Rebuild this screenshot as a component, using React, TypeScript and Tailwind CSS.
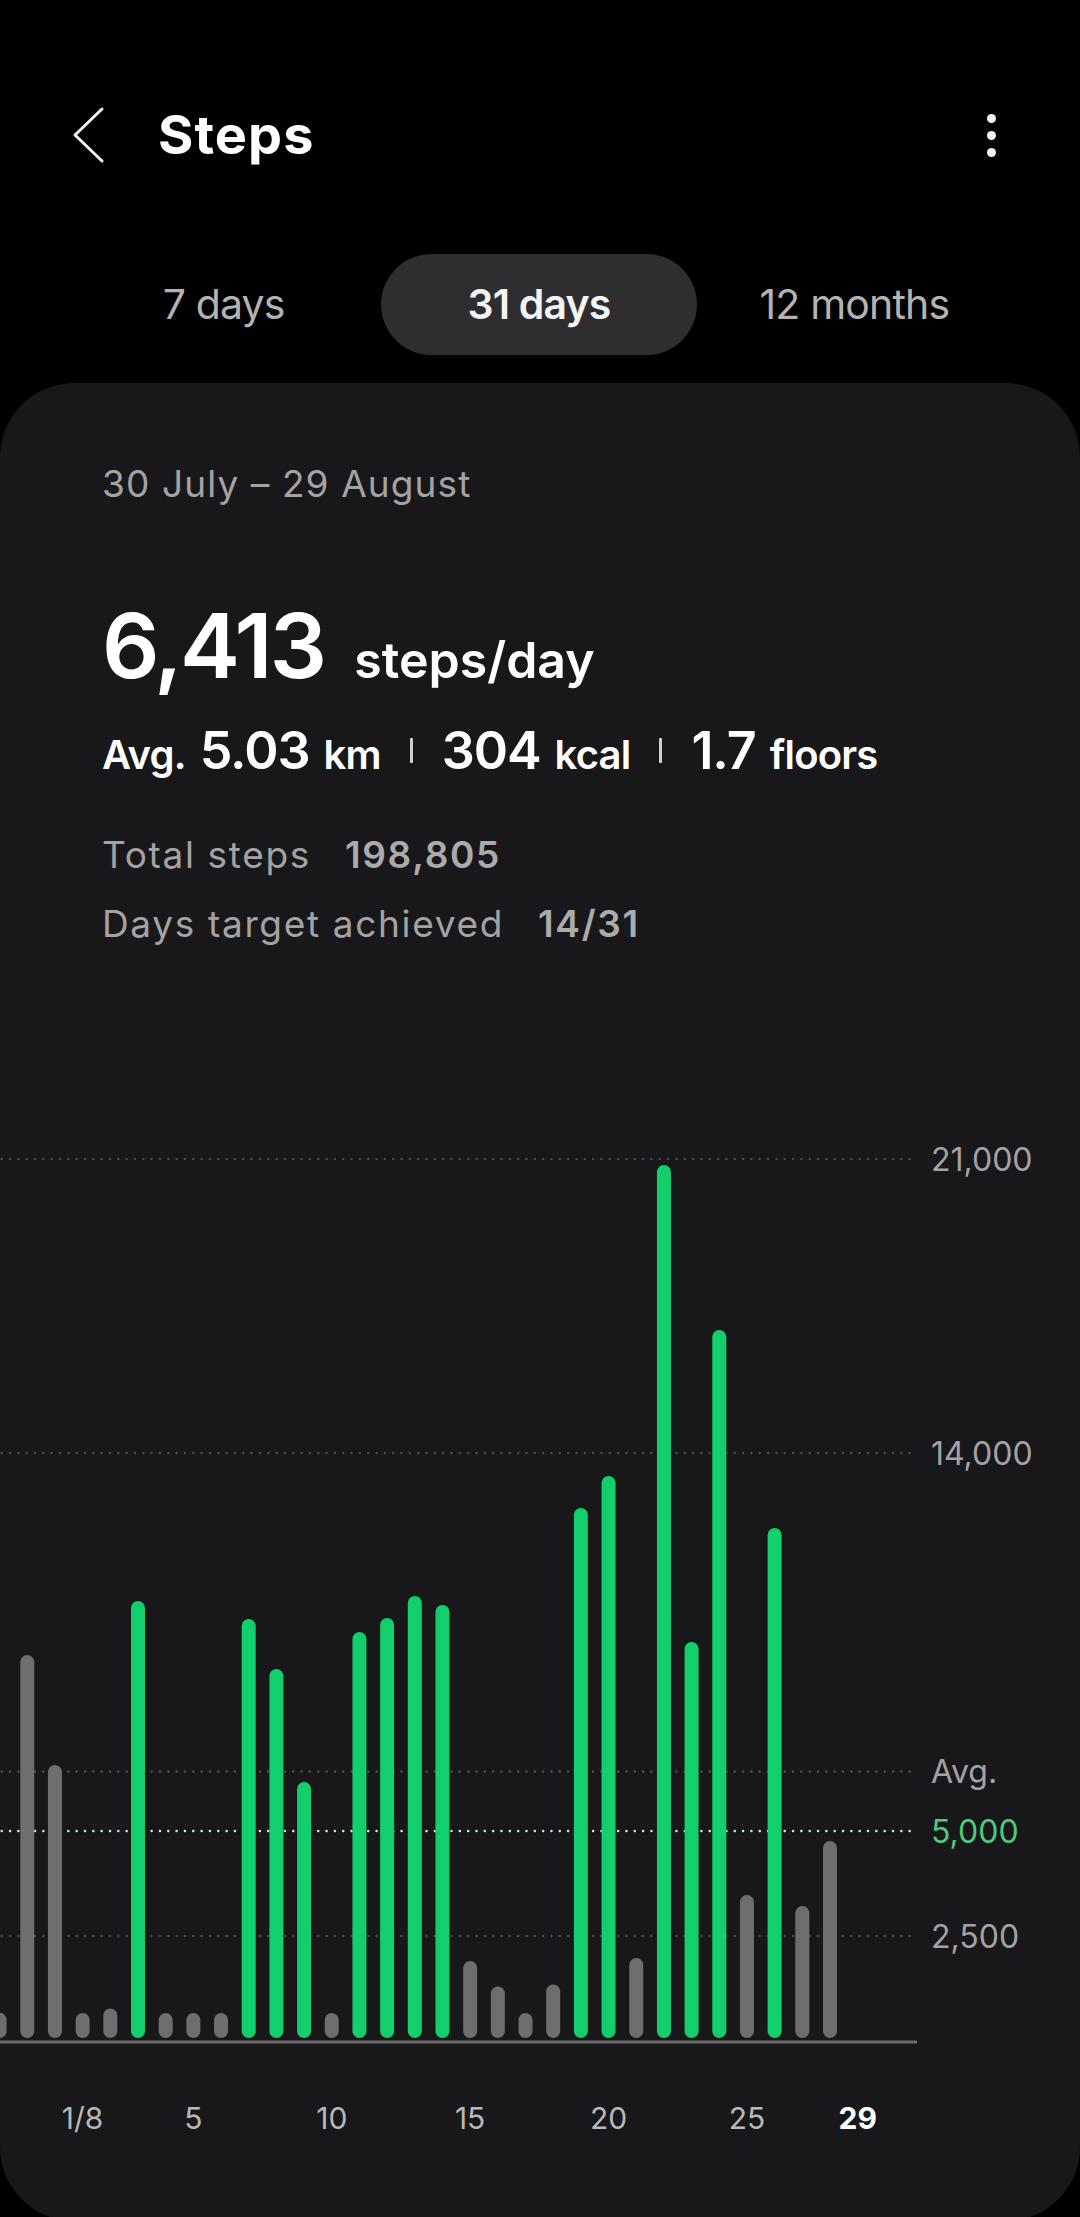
import { ReactNode } from "react";

// daily steps from 29 July to 29 August (the first is cut off at the card edge)
const days: { steps: number; hit: boolean }[] = [
  { steps: 670, hit: false },
  { steps: 9190, hit: false },
  { steps: 6571, hit: false },
  { steps: 667, hit: false },
  { steps: 774, hit: false },
  { steps: 10476, hit: true },
  { steps: 667, hit: false },
  { steps: 667, hit: false },
  { steps: 667, hit: false },
  { steps: 10048, hit: true },
  { steps: 8857, hit: true },
  { steps: 6167, hit: true },
  { steps: 667, hit: false },
  { steps: 9738, hit: true },
  { steps: 10071, hit: true },
  { steps: 10595, hit: true },
  { steps: 10381, hit: true },
  { steps: 1905, hit: false },
  { steps: 1298, hit: false },
  { steps: 667, hit: false },
  { steps: 1345, hit: false },
  { steps: 12690, hit: true },
  { steps: 13452, hit: true },
  { steps: 1976, hit: false },
  { steps: 20857, hit: true },
  { steps: 9500, hit: true },
  { steps: 16929, hit: true },
  { steps: 3476, hit: false },
  { steps: 12214, hit: true },
  { steps: 3214, hit: false },
  { steps: 4762, hit: false },
];

const BASE = 2041;
const SCALE = 0.042;
const STEP_X = 27.68;
const yOf = (v: number) => BASE - v * SCALE;
const xOf = (i: number) => STEP_X * i - 0.4;

const xLabels = [
  { i: 3, text: "1/8" },
  { i: 7, text: "5" },
  { i: 12, text: "10" },
  { i: 17, text: "15" },
  { i: 22, text: "20" },
  { i: 27, text: "25" },
];

const Divider = () => (
  <span className="w-[3px] h-[25px] rounded-[1px] bg-[#cfcfcf] mx-[29px] -translate-y-[6px]" />
);

const Stat = ({ value, unit }: { value: string; unit: string }) => (
  <>
    <span className="text-[52px] leading-none font-semibold tracking-[-0.02em]">{value}</span>
    <span className="text-[40px] leading-none font-semibold ml-[14px] tracking-[-0.02em]">{unit}</span>
  </>
);

const InfoRow = ({ label, children }: { label: string; children: ReactNode }) => (
  <div className="flex items-baseline text-[37px] leading-none tracking-[0.045em]">
    <span className="text-[#a3a3a3]">{label}</span>
    <span className="ml-[34px] font-semibold text-[#ababab]">{children}</span>
  </div>
);

const Chart = () => {
  const grid = [
    { y: yOf(21000), label: "21,000" },
    { y: yOf(14000), label: "14,000" },
    { y: yOf(2500), label: "2,500" },
  ];
  const avgY = yOf(6413);
  const goalY = yOf(5000);

  return (
    <svg width="1080" height="1100" viewBox="0 1100 1080 1100" className="block">
      {grid.map((g) => (
        <g key={g.label}>
          <line x1="1.7" x2="912" y1={g.y} y2={g.y} stroke="#4a4a4c" strokeWidth="2.6" strokeLinecap="round" strokeDasharray="0 8.33" />
          <text x="931" y={g.y + 12} fontSize="32" fill="#a3a3a3">{g.label}</text>
        </g>
      ))}
      <line x1="1.7" x2="912" y1={avgY} y2={avgY} stroke="#4a4a4c" strokeWidth="2.6" strokeLinecap="round" strokeDasharray="0 8.33" />
      <text x="931" y={avgY + 11} fontSize="32" fill="#a3a3a3">Avg.</text>
      <line x1="1.7" x2="912" y1={goalY} y2={goalY} stroke="#c6efd2" strokeWidth="2.6" strokeLinecap="round" strokeDasharray="0 8.33" />
      <text x="931" y={goalY + 12} fontSize="32" fill="#4fc97c">5,000</text>

      <line x1="0" x2="917" y1="2042" y2="2042" stroke="#6b6b6b" strokeWidth="3" />

      {days.map((d, i) => (
        <line
          key={i}
          x1={xOf(i)}
          x2={xOf(i)}
          y1={yOf(d.steps) + 7}
          y2={2031}
          stroke={d.hit ? "#12cf6c" : "#6e6e6e"}
          strokeWidth="14"
          strokeLinecap="round"
        />
      ))}

      {xLabels.map((l) => (
        <text key={l.text} x={xOf(l.i)} y="2129" fontSize="30" fill="#b8b8b8" textAnchor="middle">
          {l.text}
        </text>
      ))}
      <text x={xOf(31)} y="2129" fontSize="30" fontWeight="700" fill="#ffffff" textAnchor="middle">
        29
      </text>
    </svg>
  );
};

export default function App() {
  const tabs = ["7 days", "31 days", "12 months"];

  return (
    <div className="w-[1080px] h-[2217px] overflow-hidden bg-black text-white font-['Inter','Noto_Sans',sans-serif]">
      <header className="pt-[85px] h-[185px] flex items-center">
        <svg width="40" height="60" viewBox="0 0 40 60" className="ml-[68px] shrink-0">
          <polyline points="34,4 7,30 34,56" fill="none" stroke="#f2f2f2" strokeWidth="3" strokeLinecap="round" strokeLinejoin="round" />
        </svg>
        <h1 className="ml-[50px] text-[54px] leading-none font-bold tracking-[0.02em]">Steps</h1>
        <div className="ml-auto mr-[84px] flex flex-col gap-[8px]">
          <span className="w-[9px] h-[9px] rounded-full bg-[#f2f2f2]" />
          <span className="w-[9px] h-[9px] rounded-full bg-[#f2f2f2]" />
          <span className="w-[9px] h-[9px] rounded-full bg-[#f2f2f2]" />
        </div>
      </header>

      <nav className="mt-[69px] ml-[66px] w-[946px] grid grid-cols-3">
        {tabs.map((t) => (
          <div
            key={t}
            className={
              t === "31 days"
                ? "h-[101px] rounded-full bg-[#2e2e30] flex items-center justify-center text-[41px] font-semibold text-[#f4f4f4] tracking-[-0.02em]"
                : "h-[101px] rounded-full flex items-center justify-center text-[41px] text-[#b3b3b3] tracking-[-0.02em]"
            }
          >
            {t}
          </div>
        ))}
      </nav>

      <main className="mt-[28px] h-[1838px] rounded-[74px] bg-[#18181a] overflow-hidden">
        <div className="pl-[102px] pt-[82px]">
          <p className="text-[37px] leading-none text-[#a3a3a3] tracking-[0.03em]">30 July – 29 August</p>

          <div className="mt-[99px] flex items-baseline">
            <span className="text-[90px] leading-none font-semibold tracking-[-0.03em]">6,413</span>
            <span className="ml-[30px] text-[50px] leading-none font-semibold tracking-[0em]">steps/day</span>
          </div>

          <div className="mt-[34px] flex items-baseline">
            <span className="text-[40px] leading-none font-semibold mr-[14px] tracking-[-0.02em]">Avg.</span>
            <Stat value="5.03" unit="km" />
            <Divider />
            <Stat value="304" unit="kcal" />
            <Divider />
            <Stat value="1.7" unit="floors" />
          </div>

          <div className="mt-[59px]">
            <InfoRow label="Total steps">198,805</InfoRow>
          </div>
          <div className="mt-[32px]">
            <InfoRow label="Days target achieved">14/31</InfoRow>
          </div>
        </div>

        <div className="mt-[158px]">
          <Chart />
        </div>
      </main>
    </div>
  );
}
